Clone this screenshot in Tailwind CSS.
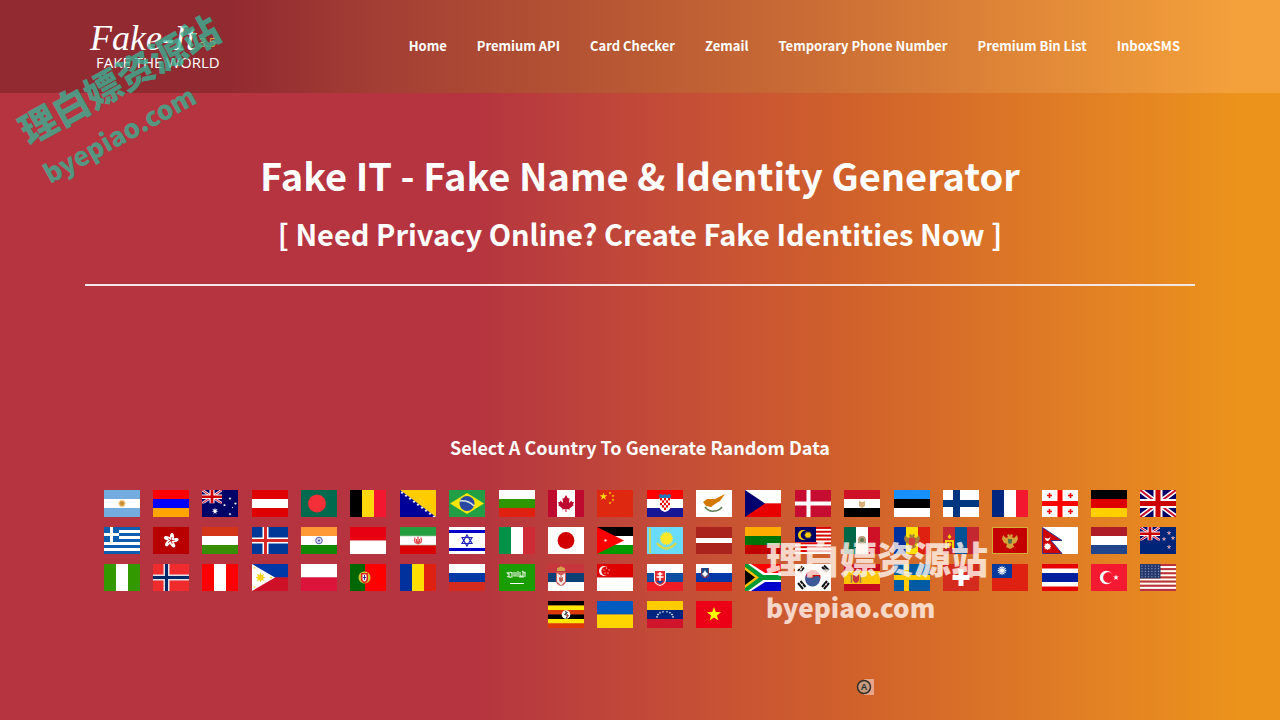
<!DOCTYPE html>
<html lang="en">
<head>
<meta charset="utf-8">
<meta name="viewport" content="width=device-width, initial-scale=1">
<title>Fake IT - Fake Name &amp; Identity Generator</title>
<script src="https://cdn.jsdelivr.net/npm/@tailwindcss/browser@4"></script>
</head>
<body class="relative min-h-screen overflow-x-hidden bg-linear-to-r from-[#b5343f] from-37% via-[#d0602b] via-66% to-[#ec931b] to-97% font-['Noto_Sans_CJK_SC',sans-serif] text-white">

<header class="bg-[linear-gradient(90deg,#922a31_18%,#a33f34_30%,#b45333_45%,#c96c35_63%,#dd8437_78%,#f5a13b_97%)]">
  <div class="mx-auto flex h-[93px] max-w-[1110px] items-center justify-between">
    <a href="#" class="block">
      <svg class="block h-[52px] w-[136px]" viewBox="0 0 136 52" fill="#fff">
        <text x="5" y="29" font-family="Z003, URW Chancery L, Liberation Serif, serif" font-style="italic" font-size="36">Fake-It</text>
        <text x="11" y="47" font-family="Open Sans, sans-serif" font-size="15">FAKE THE WORLD</text>
        <text x="114" y="26" fill="#dcae40" font-family="Open Sans, sans-serif" font-size="12">3.5</text>
      </svg>
    </a>
    <nav class="flex gap-[30px] pr-[15px] pb-px text-[13px] font-bold leading-6 whitespace-nowrap">
      <a href="#">Home</a><a href="#">Premium API</a><a href="#">Card Checker</a><a href="#">Zemail</a><a href="#">Temporary Phone Number</a><a href="#">Premium Bin List</a><a href="#">InboxSMS</a>
    </nav>
  </div>
</header>

<main class="mx-auto max-w-[1110px] pt-[52px] text-center">
  <h1 class="text-[38px] leading-[60px] font-bold">Fake IT - Fake Name &amp; Identity Generator</h1>
  <h2 class="mt-1 text-[29px] leading-[48px] font-bold">[ Need Privacy Online? Create Fake Identities Now ]</h2>
  <hr class="mt-[27px] border-t-2 border-[#f3e6e6]">
  <h3 class="mt-[147px] text-[18px] leading-7 font-bold">Select A Country To Generate Random Data</h3>
  <div id="flags" class="mt-[22px] pb-12 text-[15px] leading-[37px]"></div>
</main>

<div aria-hidden="true" class="pointer-events-none absolute top-[50px] left-[19px] -rotate-29 font-black whitespace-nowrap text-[#39b296]/80">
  <p class="text-[37px] leading-[50px]">理白嫖资源站</p>
  <p class="text-[26px] leading-[48px]">byepiao.com</p>
</div>
<div aria-hidden="true" class="pointer-events-none absolute top-[533px] left-[766px] font-black whitespace-nowrap text-[#fff5ef]/80">
  <p class="text-[37px] leading-[50px]">理白嫖资源站</p>
  <p class="text-[26px] leading-[48px]">byepiao.com</p>
</div>
<svg aria-hidden="true" class="absolute top-[679px] left-[856px] size-[18px]" viewBox="0 0 18 18"><path d="M8 0H18V16H8Z" fill="#e9a58c"/><circle cx="8" cy="8" r="6.5" fill="#c79b7c" stroke="#332e2c" stroke-width="1.5"/><text x="8" y="11" text-anchor="middle" font-family="Liberation Sans, sans-serif" font-size="9" font-weight="700" fill="#263034">A</text></svg>

<script>
// Flags are drawn on a 36 x 27 canvas.
const r = (x, y, w, h, f) => `<rect x="${x}" y="${y}" width="${w}" height="${h}" fill="${f}"/>`;
const p = (d, f) => `<path d="${d}" fill="${f}"/>`;
const l = (d, s, w) => `<path d="${d}" fill="none" stroke="${s}" stroke-width="${w}"/>`;
const c = (x, y, q, f) => `<circle cx="${x}" cy="${y}" r="${q}" fill="${f}"/>`;
const h = (...a) => a.map((f, i) => r(0, i * 27 / a.length, 36, 27 / a.length, f)).join('');
const v = (...a) => a.map((f, i) => r(i * 36 / a.length, 0, 36 / a.length, 27, f)).join('');
const star = (x, y, q, f, n = 5, k = .4) => {
  let d = [];
  for (let i = 0; i < n * 2; i++) { const t = i * Math.PI / n - Math.PI / 2, s = i % 2 ? q * k : q; d.push((x + s * Math.cos(t)).toFixed(2) + ' ' + (y + s * Math.sin(t)).toFixed(2)); }
  return p('M' + d.join('L') + 'Z', f);
};
const nordic = (bg, a, b) => r(0, 0, 36, 27, bg) + l('M13.500 0V27M0 13.500H36', a, b ? 6 : 4) + (b ? l('M13.500 0V27M0 13.500H36', b, 3) : '');
const jack = (w, ht) => `<svg width="${w}" height="${ht}" viewBox="0 0 36 27" preserveAspectRatio="none">` + r(0, 0, 36, 27, '#006') + l('M0 0L36 27M36 0L0 27', '#fff', 5) + l('M0 0L36 27M36 0L0 27', '#c8102e', 2) + l('M18 0V27M0 13.500H36', '#fff', 9) + l('M18 0V27M0 13.500H36', '#c00', 5) + '</svg>';
const shield = (x, y, w, ht, f) => p(`M${x} ${y}h${w}v${ht * .6}q0 ${ht * .3} ${-w / 2} ${ht * .4}q${-w / 2} ${-ht * .1} ${-w / 2} ${-ht * .4}Z`, f);
const eagle = (x, y, f) => p(`M${x} ${y - 4}l1-2 2 1-1 2 2 1 3-3 1 4-2 4-3 1 1 3-4 2-4-2 1-3-3-1-2-4 1-4 3 3 2-1-1-2 2-1Z`, f);
const flags = [
['Argentina', h('#74acdf','#fff','#74acdf') + star(18,13.5,4,'#e6b65c',12,.7) + c(18,13.5,2,'#c68a35')],
['Armenia', h('#f00','#00f','#ffa500')],
['Australia', r(0,0,36,27,'#006') + jack(20,13.5) + star(13,21,3.5,'#fff',7) + star(28,8.5,1.6,'#fff',7) + star(22.5,15,1.6,'#fff',7) + star(33.5,13.5,1.6,'#fff',7) + star(28,24,1.6,'#fff',7) + star(30.5,17.5,1,'#fff')],
['Austria', h('#df0000','#fff','#df0000')],
['Bangladesh', r(0,0,36,27,'#006a4e') + c(16,13.5,9,'#f42f38')],
['Belgium', v('#000','#ffd90c','#f31830')],
['Bosnia and Herzegovina', r(0,0,36,27,'#009') + p('M0 0H36V27Z','#fc0') + [0,1,2,3,4,5,6,7,8].map(i => star(2+i*4,2.5+i*3,1.8,'#fff')).join('')],
['Brazil', r(0,0,36,27,'#229e45') + p('M1 13.500 18 3 35 13.500 18 24Z','#f8e509') + c(18,13.5,7.5,'#2b49a3') + l('M11 11Q19 10 25 16','#d8e4df',1.5)],
['Bulgaria', h('#fff','#2d9600','#e02010')],
['Canada', r(0,0,36,27,'#bf0a30') + r(9,0,18,27,'#fff') + p('M18 5L20 8.500 21.500 8 21 13 23.500 10.500 24 12H26L25 14.500 26 15 21.500 18.500 22 19.500 18.500 19V22H17.500V19L14 19.500 14.500 18.500 10 15 11 14.500 10 12H12L12.500 10.500 15 13 14.500 8 16 8.500Z','#bf0a30')],
['China', r(0,0,36,27,'#de2910') + star(6.5,6.5,4,'#ffde00') + star(13,3,1.5,'#ffde00') + star(16,6,1.5,'#ffde00') + star(16,10,1.5,'#ffde00') + star(13,13,1.5,'#ffde00')],
['Croatia', h('#f00','#fff','#171796') + p('M12 5l2-1 2 1 2-1 2 1 2-1 2 1-1 4H13Z','#2376b5') + shield(12.5,8,11,14,'#fff') + [0,1,2,3,4].map(a => [0,1,2,3,4].map(b => (a+b)%2 || (b==4 && a%4==0) ? '' : r(13+a*2,8+b*2.4,2,2.4,'#e00')).join('')).join('')],
['Cyprus', r(0,0,36,27,'#fff') + p('M7 12l4-3h8l10-5-5 7-5 3-4 3-5-1Z','#d57800') + l('M9 17Q13 22 18 21Q23 21 26 17','#638259',1.5)],
['Czech Republic', h('#fff','#e80000') + p('M0 0 20 13.500 0 27Z','#00006f')],
['Denmark', nordic('#c60c30','#fff')],
['Egypt', h('#ce1126','#fff','#000') + p('M15 11l3 1 3-1v5l-3 2-3-2Z','#d9b078')],
['Estonia', h('#1791ff','#000','#fff')],
['Finland', r(0,0,36,27,'#fff') + l('M13.500 0V27M0 13.500H36','#003580',7)],
['France', v('#00267f','#fff','#f31830')],
['Georgia', r(0,0,36,27,'#fff') + l('M18 0V27M0 13.500H36','#f00',5) + l('M7.500 3v5M5 5.500h5M28.500 3v5M26 5.500h5M7.500 19v5M5 21.500h5M28.500 19v5M26 21.500h5','#e00',1.6)],
['Germany', h('#000','#de0000','#ffcf00')],
['United Kingdom', jack(36,27)],
['Greece', [0,1,2,3,4,5,6,7,8].map(i => r(0,i*3,36,3,i%2?'#fff':'#0d5eaf')).join('') + r(0,0,15,15,'#0d5eaf') + l('M7.500 0V15M0 7.500H15','#fff',3)],
['Hong Kong', r(0,0,36,27,'#b80000') + [0,72,144,216,288].map(a => `<ellipse cx="19" cy="9.500" rx="2" ry="3.600" fill="#fff" transform="rotate(${a} 18 13.5)"/>` + `<path d="M18 13.500L19 10" stroke="#b80000" stroke-width=".7" transform="rotate(${a} 18 13.5)"/>`).join('')],
['Hungary', h('#d43516','#fff','#388d00')],
['Iceland', nordic('#003897','#fff','#d72828')],
['India', h('#f93','#fff','#128807') + `<circle cx="18" cy="13.5" r="3.3" fill="#d8d8ef" stroke="#5656a8"/>` + c(18,13.5,1,'#4545a0')],
['Indonesia', h('#e70011','#fff')],
['Iran', h('#239f40','#fff','#da0000') + l('M15 10.500q-2 6 3 6 5 0 3-6M18 9.500v8M16.500 12q-1 3 1.500 4 2.500-1 1.500-4','#d44',1.2) + l('M0 9H36M0 18H36','#a4c9a8',.7)],
['Israel', r(0,0,36,27,'#fff') + r(0,3,36,3,'#0000c8') + r(0,21,36,3,'#0000c8') + l('M18 8 23 16.500H13ZM18 19 23 10.500H13Z','#2020bd',1.2)],
['Italy', v('#009246','#fff','#ce2b37')],
['Japan', r(0,0,36,27,'#fff') + c(18,13.5,8.4,'#d30000')],
['Jordan', h('#000','#fff','#090') + p('M0 0 27 13.500 0 27Z','#f00') + star(8.5,13.5,1.8,'#fff',7)],
['Kazakhstan', r(0,0,36,27,'#69dcfb') + star(19.5,11.5,7,'#ffe82a',16,.8) + l('M10 16Q19 27 29 16','#d8d84c',2.5) + l('M3 1V26','#c8d665',2)],
['Latvia', r(0,0,36,27,'#ab231d') + r(0,11,36,5,'#fff')],
['Lithuania', h('#ffac00','#007308','#c10000')],
['Malaysia', [0,1,2,3,4,5,6,7,8,9,10,11,12,13].map(i => r(0,i*27/14,36,27/14,i%2?'#fff':'#d00')).join('') + r(0,0,21,15,'#006') + c(8,8,5,'#fc0') + c(10,8,4.3,'#006') + star(13,8,4,'#fc0',14,.6)],
['Mexico', v('#006847','#fff','#ce1126') + c(18,13,4,'#b89a77') + c(18,13,2,'#5c7852') + l('M14 15q4 4 8 0','#47824a',1)],
['Moldova', v('#00319c','#ffde00','#de2110') + eagle(18,13,'#a77b3b') + shield(15,11,6,8,'#d6403b')],
['Mongolia', v('#c4272f','#015197','#c4272f') + p('M2 22V13h2v9M9 22V13h2v9M6.500 7l2 3-2 2-2-2ZM4 13h5v2H4Z','#f9cf02') + c(6.5,17.5,2,'#f9cf02')],
['Montenegro', r(0,0,36,27,'#d3ae3b') + r(1,1,34,25,'#c40000') + eagle(18,13,'#d5a239') + shield(16,12,4,5,'#58714b')],
['Nepal', r(0,0,36,27,'#fff') + '<path d="M.500 .500 20 13.500H9L20 26.500H.500Z" fill="#ce0000" stroke="#37308d"/>' + star(5.5,19.5,3.8,'#fff',12,.7) + p('M2.500 10q3 3 6 0-1 4-3 4t-3-4Z','#fff')],
['Netherlands', h('#ae1c28','#fff','#21468b')],
['New Zealand', r(0,0,36,27,'#002478') + jack(20,13.5) + [[29,6],[24,12],[33,11],[29,20]].map(a => star(a[0],a[1],2.3,'#fff') + star(a[0],a[1],1.5,'#c34a62')).join('')],
['Nigeria', v('#390','#fff','#390')],
['Norway', nordic('#ef2b2d','#e1e1e6','#002868')],
['Peru', v('#f00','#fff','#f00')],
['Philippines', h('#0038a8','#ce1126') + p('M0 0 23 13.500 0 27Z','#fff') + star(8.5,13.5,5,'#fcd116',8,.55) + star(2.5,4,1.3,'#fcd116') + star(2.5,23,1.3,'#fcd116') + star(19,13.5,1.5,'#fcd116')],
['Poland', h('#fff','#dc143c')],
['Portugal', r(0,0,36,27,'#f00') + r(0,0,15,27,'#060') + c(14.5,13.5,6,'#d1c531') + shield(11,9,7,10,'#e02020') + shield(12.5,10.5,4,7,'#fff') + l('M14.500 11v5M13 13.500h3','#339',1)],
['Romania', v('#00319c','#ffde00','#de2110')],
['Russia', h('#fff','#0039a6','#d52b1e')],
['Saudi Arabia', r(0,0,36,27,'#199d00') + l('M8 8q1 4 2 0v5h3V8m2 0v4h2V8m2 5V7m2 1v4h3V8m2 0v5m-18-.500 4 1M11 8l2 1M20 13h5M23 7l3 2','#d5efd0',1.2) + l('M11 19.500H25','#fff',1)],
['Serbia', h('#c6363c','#0c4076','#fff') + p('M9 7V4l3-1 1-1 1 1 3 1v3Z','#d2a04e') + shield(8,8,10,14,'#cf5a55') + l('M10 11l3 2 3-2v6l-3 3-3-3Z','#eee',2) + l('M13 12v6','#b65555',1)],
['Singapore', h('#df0000','#fff') + c(7,7,5,'#fff') + c(9,7,4.6,'#df0000') + [[9.5,4],[12,6],[11,9],[8,9],[7,6]].map(a => star(a[0],a[1],1,'#fff')).join('')],
['Slovakia', h('#fff','#0b4ea2','#ee1c25') + shield(7,6,12,16,'#fff') + shield(8,7,10,14,'#e52a31') + l('M13 8v9M10.500 10h5M9.500 13h7','#fff',1.5) + p('M9 17q2-1 4 0 2-1 4 0l-4 3Z','#0b4ea2')],
['Slovenia', h('#fff','#0039a6','#e02010') + shield(5,4,8,10,'#c33246') + shield(5.5,4,7,9,'#184889') + p('M6 10l2-2 1-2 1 2 2 2-3 3Z','#fff')],
['South Africa', h('#f00','#00c') + p('M0 0H6L20 9H36V18H20L6 27H0Z','#fff') + p('M0 0H3L18 11H36V16H18L3 27H0Z','#009a34') + p('M0 3 14 13.500 0 24Z','#fcbf00') + p('M0 6 10 13.500 0 21Z','#000')],
['South Korea', r(0,0,36,27,'#fff') + c(18,13.5,7.5,'#c70000') + p('M10.700 12A7.500 7.500 0 1 0 25 16Q26 12 22 12T18 13.500T10.700 12Z','#3d5897') + l('M3 7 7 2M5 8.500 9 3.500M27 3l5 5M29 1.500l5 5M3 19l5 6M5.500 17l5 6M27 23l5-6M29 25l5-6','#111',2) + l('M5 5l2 1M6 21l2-1M30 20l2 1','#fff',.8)],
['Spain', r(0,0,36,27,'#c60b1e') + r(0,7,36,13,'#ffc400') + shield(9,11,6,8,'#c8363b') + p('M9 10l1-2 2 1 2-1 1 2Z','#bc693c') + l('M7.500 11v8M16.500 11v8','#9d7554',1.5)],
['Sweden', r(0,0,36,27,'#005ba5') + l('M12.500 0V27M0 13.500H36','#fecc00',5)],
['Switzerland', r(0,0,36,27,'#d52b1e') + l('M18 5V22M9.500 13.500H26.500','#fff',5)],
['Taiwan', r(0,0,36,27,'#de2110') + r(0,0,20,14,'#08399c') + star(10,6.5,5,'#fff',12,.6) + '<circle cx="10" cy="6.5" r="2.5" fill="#fff" stroke="#5878b8" stroke-width=".6"/>'],
['Thailand', r(0,0,36,27,'#e60000') + r(0,4.5,36,18,'#fff') + r(0,9,36,9,'#00209f')],
['Turkey', r(0,0,36,27,'#f31930') + c(15.5,13.5,6.7,'#fff') + c(17.5,13.5,5.4,'#f31930') + star(25,13.5,3,'#fff')],
['United States', [0,1,2,3,4,5,6,7,8,9,10,11,12].map(i => r(0,i*27/13,36,27/13,i%2?'#fff':'#b83243')).join('') + r(0,0,20.5,14.5,'#24386d') + [0,1,2,3,4].map(b => [0,1,2,3,4,5].map(a => r(1.5+a*3.3,1.5+b*2.7,1,1,'#a4b0cc')).join('')).join('')],
['Uganda', h('#000','#ffe700','#de3908','#000','#ffe700','#de3908') + c(18,13.5,4.3,'#fff') + l('M17 10.500l2 1-2 2 3 1-2 3','#444',1.3) + r(19,13,1,3,'#c44')],
['Ukraine', h('#005bc1','#ffd500')],
['Venezuela', h('#fc0','#00247d','#cf142b') + [[10,16],[11,13.5],[13,11.7],[16,10.8],[20,10.8],[23,11.7],[25,13.5],[26,16]].map(a => star(a[0],a[1],1.3,'#fff')).join('')],
['Vietnam', r(0,0,36,27,'#ec0015') + star(18,13.5,7.5,'#ff0')]
];
document.getElementById('flags').innerHTML = flags.map(([name, art]) =>
  `<a href="#" aria-label="${name}" title="${name}" class="mx-[5px] inline-block h-[27px] w-9 align-middle"><svg class="block h-[27px] w-9 overflow-hidden" viewBox="0 0 36 27">${art}</svg></a>`).join(' ');
</script>
</body>
</html>
